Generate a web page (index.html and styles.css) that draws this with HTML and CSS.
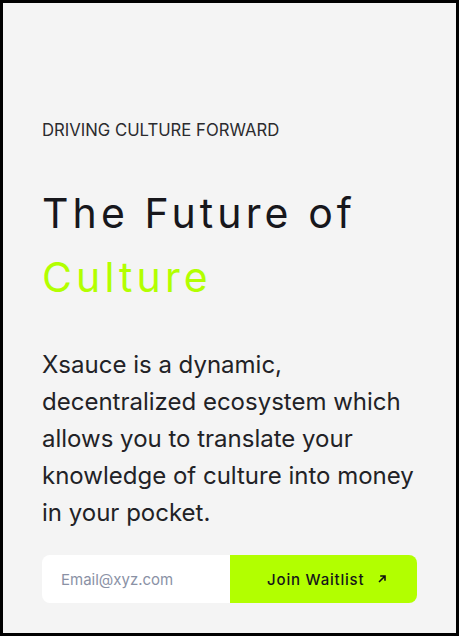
FILE: index.html
```html
<!DOCTYPE html>
<html lang="en">
<head>
<meta charset="utf-8"/>
<title>Xsauce</title>
<link rel="stylesheet" href="styles.css">
</head>
<body>
<div class="page">
  <section class="hero">
    <p class="eyebrow">DRIVING CULTURE FORWARD</p>
    <h1 class="title">The Future of <span class="accent">Culture</span></h1>
    <p class="lead">Xsauce is a dynamic, decentralized ecosystem which allows you to translate your knowledge of culture into money in your pocket.</p>
    <form class="waitlist" onsubmit="return false;">
      <input class="email" type="email" placeholder="Email@xyz.com">
      <button class="join" type="submit">Join Waitlist
        <svg width="10" height="10" viewBox="0 0 10 10" fill="none" stroke="#111" stroke-width="1.6"><path d="M2 8L8 2M3.2 2H8V6.8"/></svg>
      </button>
    </form>
  </section>
</div>
</body>
</html>
```

FILE: styles.css
```css
html, body { margin: 0; padding: 0; }
body { font-family: Inter, "Noto Sans", sans-serif; background: #000; }
.page {
  box-sizing: border-box;
  width: 459px;
  height: 636px;
  border: 3px solid #000;
  background: #f4f4f4;
}
.hero { padding: 116px 39px 0 39px; }
.eyebrow {
  margin: 0;
  font-size: 16.7px;
  line-height: 22px;
  color: #2b2b2e;
}
.title {
  margin: 40px 0 0 0;
  font-size: 41px;
  font-weight: 400;
  line-height: 64px;
  letter-spacing: 4.1px;
  color: #17171c;
}
.accent { display: block; color: #b2ff00; }
.lead {
  margin: 37px 0 0 0;
  font-size: 24px;
  line-height: 37px;
  color: #222226;
}
.waitlist {
  display: flex;
  margin-top: 24px;
  height: 48px;
}
.email, .join { box-sizing: border-box; flex: 0 0 50%; min-width: 0; }
.email {
  border: none;
  outline: none;
  background: #fff;
  border-radius: 8px 0 0 8px;
  padding: 0 19px;
  font-family: Inter, sans-serif;
  font-size: 15px;
  color: #222;
}
.email::placeholder { color: #8a91a5; }
.join {
  display: flex;
  align-items: center;
  justify-content: center;
  gap: 13px;
  border: none;
  background: #b2ff00;
  border-radius: 0 8px 8px 0;
  font-family: Inter, sans-serif;
  font-size: 15px;
  font-weight: 500;
  letter-spacing: 0.8px;
  color: #16161a;
  cursor: pointer;
  padding: 0 0 0 8px;
}
```
